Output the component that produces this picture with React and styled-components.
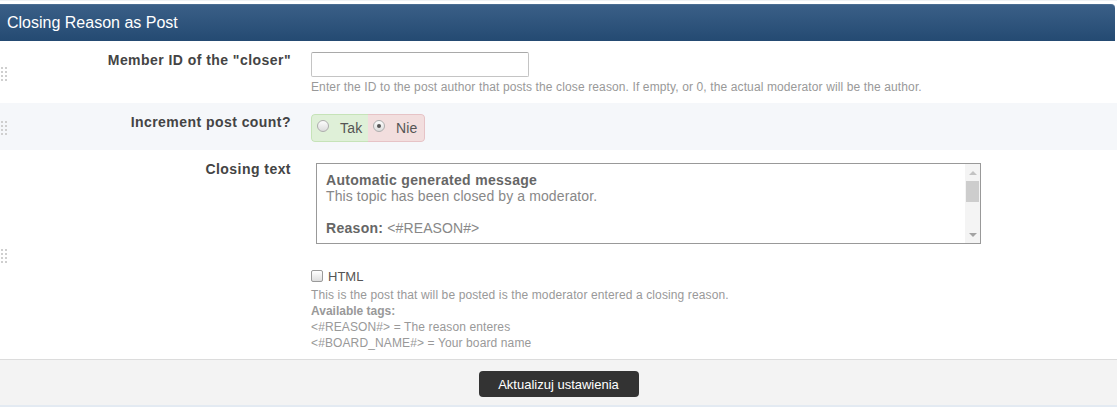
import styled, { createGlobalStyle } from "styled-components";

const GlobalStyle = createGlobalStyle`
  html, body {
    margin: 0;
    padding: 0;
    background: #fff;
    font-family: "Liberation Sans", Arial, sans-serif;
  }
`;

const Page = styled.div`
  padding-top: 3px;
  background: #fff;
  border-top: 1px solid #eef1f4;
`;

const Header = styled.div`
  height: 36px;
  margin-right: 2px;
  padding-left: 7px;
  display: flex;
  align-items: center;
  color: #fff;
  font-size: 16px;
  background: linear-gradient(#3a5f87, #244a72);
  border-top: 1px solid #4a6d92;
  border-radius: 0 4px 0 0;
`;

const Row = styled.div`
  display: grid;
  grid-template-columns: 10px 281px 1fr;
  padding: 11px 0 8px;
  background: ${(props) => (props.alt ? "#f5f7fa" : "#fff")};
`;

const Handle = styled.div`
  align-self: center;
  margin-left: 1px;
  display: grid;
  grid-template-columns: repeat(2, 2px);
  grid-auto-rows: 2px;
  gap: 2px;

  span {
    background: #cfcfcf;
  }
`;

const Label = styled.div`
  text-align: right;
  font-size: 14px;
  letter-spacing: 0.45px;
  line-height: 16px;
  font-weight: bold;
  color: #444;
`;

const Field = styled.div`
  display: flex;
  flex-direction: column;
  align-items: flex-start;
  padding-left: 20px;
`;

const TextInput = styled.input`
  width: 218px;
  height: 25px;
  box-sizing: border-box;
  border: 1px solid #c4c4c4;
  border-top-color: #a9a9a9;
  border-radius: 2px;
  padding: 2px 4px;
  font: 13px "Liberation Sans", Arial, sans-serif;
  outline: none;
`;

const Desc = styled.div`
  margin-top: ${(props) => props.gap || 0}px;
  font-size: 12px;
  letter-spacing: 0.12px;
  line-height: 16px;
  color: #999;

  b {
    color: #999;
    letter-spacing: 0;
  }
`;

const Toggle = styled.div`
  display: flex;
  height: 28px;
  box-sizing: border-box;
  border-radius: 4px;
  overflow: hidden;
`;

const ToggleHalf = styled.label`
  display: flex;
  align-items: center;
  box-sizing: border-box;
  width: 57px;
  padding-left: 5px;
  font-size: 14px;
  letter-spacing: 0.2px;
  color: #555;
  background: ${(props) => props.bg};
  border: 1px solid ${(props) => props.border};
  border-radius: ${(props) => (props.left ? "4px 0 0 4px" : "0 4px 4px 0")};
  ${(props) => (props.left ? "border-right: none;" : "border-left: none;")}
`;

const RadioDot = styled.span`
  position: relative;
  width: 12px;
  height: 12px;
  box-sizing: border-box;
  border-radius: 50%;
  border: 1px solid #adadad;
  background: linear-gradient(#fdfdfd, #dcdcdc);
  margin-right: 11px;
  margin-top: -4px;

  &::after {
    content: "";
    display: ${(props) => (props.checked ? "block" : "none")};
    position: absolute;
    left: 3px;
    top: 3px;
    width: 4px;
    height: 4px;
    border-radius: 50%;
    background: #555;
  }
`;

const Editor = styled.div`
  display: flex;
  width: 665px;
  height: 81px;
  box-sizing: border-box;
  margin: 2px 0 0 5px;
  border: 1px solid #999;
  background: #fff;
`;

const EditorBody = styled.div`
  flex: 1;
  padding: 8px 9px;
  font-size: 14px;
  letter-spacing: 0.1px;
  line-height: 16px;
  color: #888;
  overflow: hidden;
  white-space: nowrap;

  b {
    color: #666;
    letter-spacing: 0.3px;
  }
`;

const ScrollTrack = styled.div`
  width: 15px;
  background: #f4f4f4;
  display: flex;
  flex-direction: column;
  align-items: center;
  padding-top: 7px;
  box-sizing: border-box;
`;

const Arrow = styled.span`
  width: 0;
  height: 0;
  border-left: 4px solid transparent;
  border-right: 4px solid transparent;
  ${(props) =>
    props.down
      ? "border-top: 4px solid #a3a3a3; margin-top: auto; margin-bottom: 6px;"
      : "border-bottom: 4px solid #c3c3c3;"}
`;

const Thumb = styled.span`
  width: 13px;
  height: 21px;
  margin-top: 6px;
  background: #cdcdcd;
`;

const CheckRow = styled.label`
  display: flex;
  align-items: center;
  margin-top: 25px;
  font-size: 13px;
  line-height: 16px;
  color: #555;
`;

const CheckBox = styled.span`
  width: 12px;
  height: 12px;
  box-sizing: border-box;
  border: 1px solid #9a9a9a;
  border-radius: 2px;
  background: linear-gradient(#fff, #dedede);
  margin-right: 5px;
  margin-top: -3px;
`;

const Footer = styled.div`
  display: flex;
  justify-content: center;
  padding: 11px 0 8px;
  background: #f3f3f3;
  border-top: 1px solid #dcdcdc;
  border-bottom: 2px solid #e3eaf2;
`;

const Button = styled.button`
  width: 160px;
  height: 26px;
  border: none;
  border-radius: 4px;
  background: #333;
  color: #fff;
  font: 13px "Liberation Sans", Arial, sans-serif;
  cursor: pointer;
`;

const Grip = () => (
  <Handle>
    {Array.from({ length: 8 }).map((_, i) => (
      <span key={i} />
    ))}
  </Handle>
);

const App = () => (
  <>
    <GlobalStyle />
    <Page>
      <Header>Closing Reason as Post</Header>

      <Row>
        <Grip />
        <Label>Member ID of the "closer"</Label>
        <Field>
          <TextInput type="text" />
          <Desc gap={2}>
            Enter the ID to the post author that posts the close reason. If empty, or 0, the actual
            moderator will be the author.
          </Desc>
        </Field>
      </Row>

      <Row alt>
        <Grip />
        <Label>Increment post count?</Label>
        <Field>
          <Toggle>
            <ToggleHalf left bg="#dff0d8" border="#c6e3b8">
              <RadioDot />
              Tak
            </ToggleHalf>
            <ToggleHalf bg="#f2dede" border="#e6c3c6">
              <RadioDot checked />
              Nie
            </ToggleHalf>
          </Toggle>
        </Field>
      </Row>

      <Row>
        <Grip />
        <Label>Closing text</Label>
        <Field>
          <Editor>
            <EditorBody>
              <b>Automatic generated message</b>
              <br />
              This topic has been closed by a moderator.
              <br />
              <br />
              <b>Reason:</b> &lt;#REASON#&gt;
            </EditorBody>
            <ScrollTrack>
              <Arrow />
              <Thumb />
              <Arrow down />
            </ScrollTrack>
          </Editor>
          <CheckRow>
            <CheckBox />
            HTML
          </CheckRow>
          <Desc gap={2}>
            This is the post that will be posted is the moderator entered a closing reason.
            <br />
            <b>Available tags:</b>
            <br />
            &lt;#REASON#&gt; = The reason enteres
            <br />
            &lt;#BOARD_NAME#&gt; = Your board name
          </Desc>
        </Field>
      </Row>

      <Footer>
        <Button>Aktualizuj ustawienia</Button>
      </Footer>
    </Page>
  </>
);

export default App;
